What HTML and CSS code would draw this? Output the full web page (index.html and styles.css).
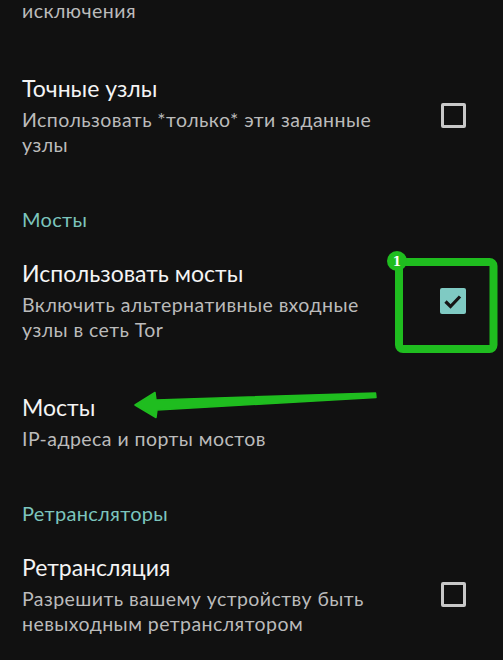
FILE: index.html
```html
<!DOCTYPE html>
<html lang="ru">
<head>
    <meta charset="UTF-8">
    <meta name="viewport" content="width=device-width, initial-scale=1.0">
    <title>Настройки Tor</title>
    <link rel="stylesheet" href="styles.css">
</head>
<body>

    <div class="screen">
        <div class="pref pref-tail">
            <div class="pref-text">
                <div class="summary">исключения</div>
            </div>
        </div>

        <div class="pref">
            <div class="pref-text">
                <div class="title">Точные узлы</div>
                <div class="summary">Использовать *только* эти заданные узлы</div>
            </div>
            <span class="checkbox"></span>
        </div>

        <div class="category">Мосты</div>

        <div class="pref">
            <div class="pref-text">
                <div class="title">Использовать мосты</div>
                <div class="summary">Включить альтернативные входные узлы в сеть Tor</div>
            </div>
            <span class="checkbox checked">
                <svg viewBox="0 0 26 26" width="26" height="26">
                    <polyline points="5.5,13.5 10.5,18.5 20,8.5" fill="none" stroke="#161616" stroke-width="3.2"/>
                </svg>
            </span>
        </div>

        <div class="pref">
            <div class="pref-text">
                <div class="title">Мосты</div>
                <div class="summary">IP-адреса и порты мостов</div>
            </div>
        </div>

        <div class="category">Ретрансляторы</div>

        <div class="pref">
            <div class="pref-text">
                <div class="title">Ретрансляция</div>
                <div class="summary">Разрешить вашему устройству быть невыходным ретранслятором</div>
            </div>
            <span class="checkbox"></span>
        </div>
    </div>

    <!-- green marks drawn over the list -->
    <svg class="marks" viewBox="0 0 503 660" width="503" height="660">
        <rect x="399" y="262" width="94.5" height="87" rx="4" fill="none" stroke="#1fbd1f" stroke-width="8"/>
        <circle cx="397" cy="261" r="10" fill="#1fbd1f"/>
        <text x="397" y="265.5" class="badge-num" text-anchor="middle">1</text>
        <polygon points="375.5,393 376,397.5 157,410 156,417.5 135,405 155,392.5 156,400" fill="#1fbd1f" stroke="#1fbd1f" stroke-width="1.5" stroke-linejoin="round"/>
    </svg>

</body>
</html>
```

FILE: styles.css
```css
body {
    margin: 0;
    padding: 0;
    background-color: #111111;
    font-family: Lato, "Noto Sans", sans-serif;
    width: 503px;
    height: 660px;
    overflow: hidden;
    position: relative;
}
.screen {
    display: flex;
    flex-direction: column;
}
.pref {
    display: flex;
    align-items: center;
    gap: 50px;
    padding: 26px 37px 25px 22px;
}
.pref-tail {
    padding-top: 0;
    margin-top: -2px;
}
.pref-text {
    flex: 1;
}
.title {
    color: #f4f4f4;
    font-size: 23px;
    line-height: 28px;
}
.summary {
    color: #bbbbbb;
    font-size: 19.5px;
    letter-spacing: 0.45px;
    line-height: 25px;
    margin-top: 5px;
}
.pref-tail .summary {
    margin-top: 0;
}
.category {
    color: #7cc5bd;
    font-size: 20px;
    letter-spacing: 0.3px;
    line-height: 24px;
    padding: 25px 22px 2px;
}
.checkbox {
    flex: none;
    width: 25px;
    height: 25px;
    box-sizing: border-box;
    border: 3px solid #c8c8c8;
    border-radius: 2px;
}
.checkbox.checked {
    width: 26px;
    height: 26px;
    border: none;
    background-color: #7fcac3;
    display: flex;
}
.marks {
    position: absolute;
    left: 0;
    top: 0;
    pointer-events: none;
}
.badge-num {
    fill: #ffffff;
    font-family: "DejaVu Serif", serif;
    font-weight: bold;
    font-size: 12px;
}
```
